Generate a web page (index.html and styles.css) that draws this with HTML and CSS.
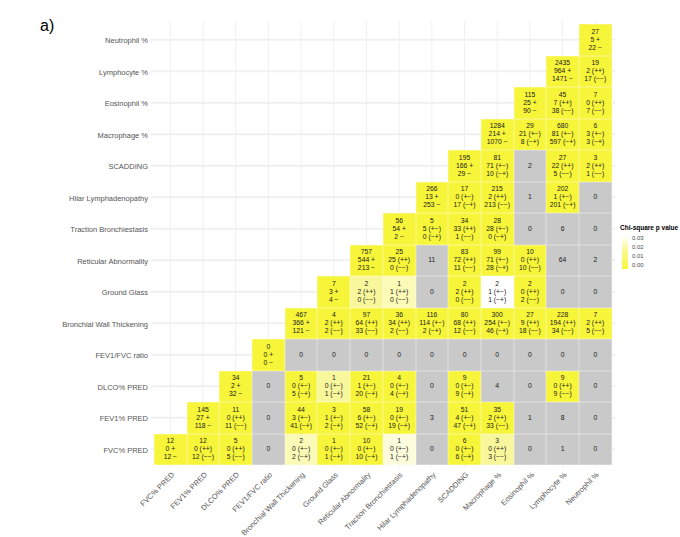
FILE: index.html
```html
<!DOCTYPE html>
<html lang="en">
<head>
<meta charset="utf-8">
<title>Chi-square heatmap</title>
<link rel="stylesheet" href="styles.css">
</head>
<body>
<div class="page">
  <div class="tag">a)</div>
  <div class="ylabels">
    <div class="yl">Neutrophil %</div>
    <div class="yl">Lymphocyte %</div>
    <div class="yl">Eosinophil %</div>
    <div class="yl">Macrophage %</div>
    <div class="yl">SCADDING</div>
    <div class="yl">Hilar Lymphadenopathy</div>
    <div class="yl">Traction Bronchiestasis</div>
    <div class="yl">Reticular Abnormality</div>
    <div class="yl">Ground Glass</div>
    <div class="yl">Bronchial Wall Thickening</div>
    <div class="yl">FEV1/FVC ratio</div>
    <div class="yl">DLCO% PRED</div>
    <div class="yl">FEV1% PRED</div>
    <div class="yl">FVC% PRED</div>
  </div>

  <div class="panel">
    <div class="cells">
      <!-- Neutrophil % -->
      <div></div><div></div><div></div><div></div><div></div><div></div><div></div><div></div><div></div><div></div><div></div><div></div><div></div>
      <div class="c y"><span>27</span><span>5 +</span><span>22 −</span></div>
      <!-- Lymphocyte % -->
      <div></div><div></div><div></div><div></div><div></div><div></div><div></div><div></div><div></div><div></div><div></div><div></div>
      <div class="c y"><span>2435</span><span>964 +</span><span>1471 −</span></div>
      <div class="c y"><span>19</span><span>2 (++)</span><span>17 (−−)</span></div>
      <!-- Eosinophil % -->
      <div></div><div></div><div></div><div></div><div></div><div></div><div></div><div></div><div></div><div></div><div></div>
      <div class="c y"><span>115</span><span>25 +</span><span>90 −</span></div>
      <div class="c y"><span>45</span><span>7 (++)</span><span>38 (−−)</span></div>
      <div class="c y"><span>7</span><span>0 (++)</span><span>7 (−−)</span></div>
      <!-- Macrophage % -->
      <div></div><div></div><div></div><div></div><div></div><div></div><div></div><div></div><div></div><div></div>
      <div class="c y"><span>1284</span><span>214 +</span><span>1070 −</span></div>
      <div class="c y"><span>29</span><span>21 (+−)</span><span>8 (−+)</span></div>
      <div class="c y"><span>680</span><span>81 (+−)</span><span>597 (−+)</span></div>
      <div class="c y"><span>6</span><span>3 (+−)</span><span>3 (−+)</span></div>
      <!-- SCADDING -->
      <div></div><div></div><div></div><div></div><div></div><div></div><div></div><div></div><div></div>
      <div class="c y"><span>195</span><span>166 +</span><span>29 −</span></div>
      <div class="c y"><span>81</span><span>71 (+−)</span><span>10 (−+)</span></div>
      <div class="c g"><span>2</span></div>
      <div class="c y"><span>27</span><span>22 (++)</span><span>5 (−−)</span></div>
      <div class="c y"><span>3</span><span>2 (++)</span><span>1 (−−)</span></div>
      <!-- Hilar Lymphadenopathy -->
      <div></div><div></div><div></div><div></div><div></div><div></div><div></div><div></div>
      <div class="c y"><span>266</span><span>13 +</span><span>253 −</span></div>
      <div class="c y"><span>17</span><span>0 (+−)</span><span>17 (−+)</span></div>
      <div class="c y"><span>215</span><span>2 (++)</span><span>213 (−−)</span></div>
      <div class="c g"><span>1</span></div>
      <div class="c y"><span>202</span><span>1 (+−)</span><span>201 (−+)</span></div>
      <div class="c g"><span>0</span></div>
      <!-- Traction -->
      <div></div><div></div><div></div><div></div><div></div><div></div><div></div>
      <div class="c y"><span>56</span><span>54 +</span><span>2 −</span></div>
      <div class="c y"><span>5</span><span>5 (+−)</span><span>0 (−+)</span></div>
      <div class="c y"><span>34</span><span>33 (++)</span><span>1 (−−)</span></div>
      <div class="c y"><span>28</span><span>28 (+−)</span><span>0 (−+)</span></div>
      <div class="c g"><span>0</span></div>
      <div class="c g"><span>6</span></div>
      <div class="c g"><span>0</span></div>
      <!-- Reticular -->
      <div></div><div></div><div></div><div></div><div></div><div></div>
      <div class="c y"><span>757</span><span>544 +</span><span>213 −</span></div>
      <div class="c y"><span>25</span><span>25 (++)</span><span>0 (−−)</span></div>
      <div class="c g"><span>11</span></div>
      <div class="c y"><span>83</span><span>72 (++)</span><span>11 (−−)</span></div>
      <div class="c y"><span>99</span><span>71 (+−)</span><span>28 (−+)</span></div>
      <div class="c y"><span>10</span><span>0 (++)</span><span>10 (−−)</span></div>
      <div class="c g"><span>64</span></div>
      <div class="c g"><span>2</span></div>
      <!-- Ground Glass -->
      <div></div><div></div><div></div><div></div><div></div>
      <div class="c y"><span>7</span><span>3 +</span><span>4 −</span></div>
      <div class="c l1"><span>2</span><span>2 (++)</span><span>0 (−−)</span></div>
      <div class="c l2"><span>1</span><span>1 (++)</span><span>0 (−−)</span></div>
      <div class="c g"><span>0</span></div>
      <div class="c y"><span>2</span><span>2 (++)</span><span>0 (−−)</span></div>
      <div class="c w"><span>2</span><span>1 (+−)</span><span>1 (−+)</span></div>
      <div class="c y"><span>2</span><span>0 (++)</span><span>2 (−−)</span></div>
      <div class="c g"><span>0</span></div>
      <div class="c g"><span>0</span></div>
      <!-- Bronchial Wall Thickening -->
      <div></div><div></div><div></div><div></div>
      <div class="c y"><span>467</span><span>366 +</span><span>121 −</span></div>
      <div class="c y"><span>4</span><span>2 (++)</span><span>2 (−−)</span></div>
      <div class="c y"><span>97</span><span>64 (++)</span><span>33 (−−)</span></div>
      <div class="c y"><span>36</span><span>34 (++)</span><span>2 (−−)</span></div>
      <div class="c y"><span>116</span><span>114 (+−)</span><span>2 (−+)</span></div>
      <div class="c y"><span>80</span><span>68 (++)</span><span>12 (−−)</span></div>
      <div class="c y"><span>300</span><span>254 (+−)</span><span>46 (−+)</span></div>
      <div class="c y"><span>27</span><span>9 (++)</span><span>18 (−−)</span></div>
      <div class="c y"><span>228</span><span>194 (++)</span><span>34 (−−)</span></div>
      <div class="c y"><span>7</span><span>2 (++)</span><span>5 (−−)</span></div>
      <!-- FEV1/FVC ratio -->
      <div></div><div></div><div></div>
      <div class="c y"><span>0</span><span>0 +</span><span>0 −</span></div>
      <div class="c g"><span>0</span></div>
      <div class="c g"><span>0</span></div>
      <div class="c g"><span>0</span></div>
      <div class="c g"><span>0</span></div>
      <div class="c g"><span>0</span></div>
      <div class="c g"><span>0</span></div>
      <div class="c g"><span>0</span></div>
      <div class="c g"><span>0</span></div>
      <div class="c g"><span>0</span></div>
      <div class="c g"><span>0</span></div>
      <!-- DLCO% PRED -->
      <div></div><div></div>
      <div class="c y"><span>34</span><span>2 +</span><span>32 −</span></div>
      <div class="c g"><span>0</span></div>
      <div class="c y"><span>5</span><span>0 (+−)</span><span>5 (−+)</span></div>
      <div class="c l1"><span>1</span><span>0 (+−)</span><span>1 (−+)</span></div>
      <div class="c y"><span>21</span><span>1 (+−)</span><span>20 (−+)</span></div>
      <div class="c y"><span>4</span><span>0 (+−)</span><span>4 (−+)</span></div>
      <div class="c g"><span>0</span></div>
      <div class="c y"><span>9</span><span>0 (+−)</span><span>9 (−+)</span></div>
      <div class="c g"><span>4</span></div>
      <div class="c g"><span>0</span></div>
      <div class="c y"><span>9</span><span>0 (++)</span><span>9 (−−)</span></div>
      <div class="c g"><span>0</span></div>
      <!-- FEV1% PRED -->
      <div></div>
      <div class="c y"><span>145</span><span>27 +</span><span>118 −</span></div>
      <div class="c y"><span>11</span><span>0 (++)</span><span>11 (−−)</span></div>
      <div class="c g"><span>0</span></div>
      <div class="c y"><span>44</span><span>3 (+−)</span><span>41 (−+)</span></div>
      <div class="c y"><span>3</span><span>1 (+−)</span><span>2 (−+)</span></div>
      <div class="c y"><span>58</span><span>6 (+−)</span><span>52 (−+)</span></div>
      <div class="c y"><span>19</span><span>0 (+−)</span><span>19 (−+)</span></div>
      <div class="c g"><span>3</span></div>
      <div class="c y"><span>51</span><span>4 (+−)</span><span>47 (−+)</span></div>
      <div class="c y"><span>35</span><span>2 (++)</span><span>33 (−−)</span></div>
      <div class="c g"><span>1</span></div>
      <div class="c g"><span>8</span></div>
      <div class="c g"><span>0</span></div>
      <!-- FVC% PRED -->
      <div class="c y"><span>12</span><span>0 +</span><span>12 −</span></div>
      <div class="c y"><span>12</span><span>0 (++)</span><span>12 (−−)</span></div>
      <div class="c y"><span>5</span><span>0 (++)</span><span>5 (−−)</span></div>
      <div class="c g"><span>0</span></div>
      <div class="c l2"><span>2</span><span>0 (+−)</span><span>2 (−+)</span></div>
      <div class="c y"><span>1</span><span>0 (+−)</span><span>1 (−+)</span></div>
      <div class="c y"><span>10</span><span>0 (+−)</span><span>10 (−+)</span></div>
      <div class="c l3"><span>1</span><span>0 (+−)</span><span>1 (−+)</span></div>
      <div class="c g"><span>0</span></div>
      <div class="c y"><span>6</span><span>0 (+−)</span><span>6 (−+)</span></div>
      <div class="c l1"><span>3</span><span>0 (++)</span><span>3 (−−)</span></div>
      <div class="c g"><span>0</span></div>
      <div class="c g"><span>1</span></div>
      <div class="c g"><span>0</span></div>
    </div>
  </div>

  <div class="legend">
    <div class="legend-title">Chi-square p value</div>
    <div class="legend-body">
      <div class="bar"></div>
      <div class="ticks">
        <span>0.03</span><span>0.02</span><span>0.01</span><span>0.00</span>
      </div>
    </div>
  </div>

  <div class="xaxis">
    <div class="xt"><span class="xl">FVC% PRED</span></div>
    <div class="xt"><span class="xl">FEV1% PRED</span></div>
    <div class="xt"><span class="xl">DLCO% PRED</span></div>
    <div class="xt"><span class="xl">FEV1/FVC ratio</span></div>
    <div class="xt"><span class="xl">Bronchial Wall Thickening</span></div>
    <div class="xt"><span class="xl">Ground Glass</span></div>
    <div class="xt"><span class="xl">Reticular Abnormality</span></div>
    <div class="xt"><span class="xl">Traction Bronchiestasis</span></div>
    <div class="xt"><span class="xl">Hilar Lymphadenopathy</span></div>
    <div class="xt"><span class="xl">SCADDING</span></div>
    <div class="xt"><span class="xl">Macrophage %</span></div>
    <div class="xt"><span class="xl">Eosinophil %</span></div>
    <div class="xt"><span class="xl">Lymphocyte %</span></div>
    <div class="xt"><span class="xl">Neutrophil %</span></div>
  </div>
</div>
</body>
</html>
```

FILE: styles.css
```css
html, body {
  margin: 0;
  padding: 0;
  background: #ffffff;
  overflow: hidden;
}

body {
  width: 680px;
  height: 537px;
  font-family: "Liberation Sans", Arial, sans-serif;
}

.page {
  display: grid;
  grid-template-columns: 151px 464px 65px;
  grid-template-rows: 4px 447px 69px;
  padding-top: 17px;
}

.tag {
  grid-column: 1;
  grid-row: 1 / 3;
  align-self: start;
  margin-left: 40px;
  font-size: 16px;
  line-height: 18px;
  color: #000000;
}

.ylabels {
  grid-column: 1;
  grid-row: 2;
  display: flex;
  flex-direction: column;
  padding-top: 4px;
}

.yl {
  height: 31.5px;
  display: flex;
  align-items: center;
  justify-content: flex-end;
  padding-right: 3px;
  font-size: 7.5px;
  color: #555555;
  white-space: nowrap;
}

.panel {
  grid-column: 2;
  grid-row: 2;
  padding: 3px;
  background-image:
    linear-gradient(to right, transparent 15.85px, #f0f0f0 15.85px, #f0f0f0 16.85px, transparent 16.85px),
    linear-gradient(to bottom, transparent 15.25px, #f0f0f0 15.25px, #f0f0f0 16.25px, transparent 16.25px);
  background-size: 32.7px 100%, 100% 31.5px;
  background-position: 3px 0, 0 3px;
  background-repeat: repeat-x, repeat-y;
}

.cells {
  display: grid;
  grid-template-columns: repeat(14, 32.7px);
  grid-template-rows: repeat(14, 31.5px);
}

.c {
  box-sizing: border-box;
  display: flex;
  flex-direction: column;
  align-items: center;
  justify-content: center;
  font-size: 6.8px;
  line-height: 7.9px;
  color: #1a1a1a;
  white-space: nowrap;
  box-shadow: inset 0 0 0 0.5px rgba(255, 255, 255, 0.45);
}

.y  { background: #f7f53a; }
.g  { background: #c9c9c9; }
.l1 { background: #f9f79c; }
.l2 { background: #fbfab6; }
.l3 { background: #fdfcdc; }
.w  { background: #ffffff; }

.legend {
  grid-column: 3;
  grid-row: 2;
  align-self: start;
  margin-top: 203px;
  padding-left: 5px;
}

.legend-title {
  font-size: 6.5px;
  line-height: 8px;
  font-weight: bold;
  color: #000000;
  white-space: nowrap;
}

.legend-body {
  display: flex;
  align-items: center;
  gap: 4px;
  margin-top: 2.5px;
}

.bar {
  width: 6px;
  height: 33px;
  margin-left: 2px;
  background: linear-gradient(to bottom, #ffffff 0%, #fbfa9c 40%, #f7f53a 100%);
}

.ticks {
  height: 35px;
  display: flex;
  flex-direction: column;
  justify-content: space-between;
  font-size: 6px;
  line-height: 7px;
  color: #4d4d4d;
}

.xaxis {
  grid-column: 2;
  grid-row: 3;
  display: flex;
  padding-left: 3px;
}

.xt {
  flex: none;
  width: 32.7px;
  position: relative;
}

.xl {
  position: absolute;
  right: 50%;
  top: 3px;
  transform-origin: 100% 0;
  transform: rotate(-45deg);
  white-space: nowrap;
  font-size: 7.5px;
  line-height: 8px;
  color: #555555;
}
```
